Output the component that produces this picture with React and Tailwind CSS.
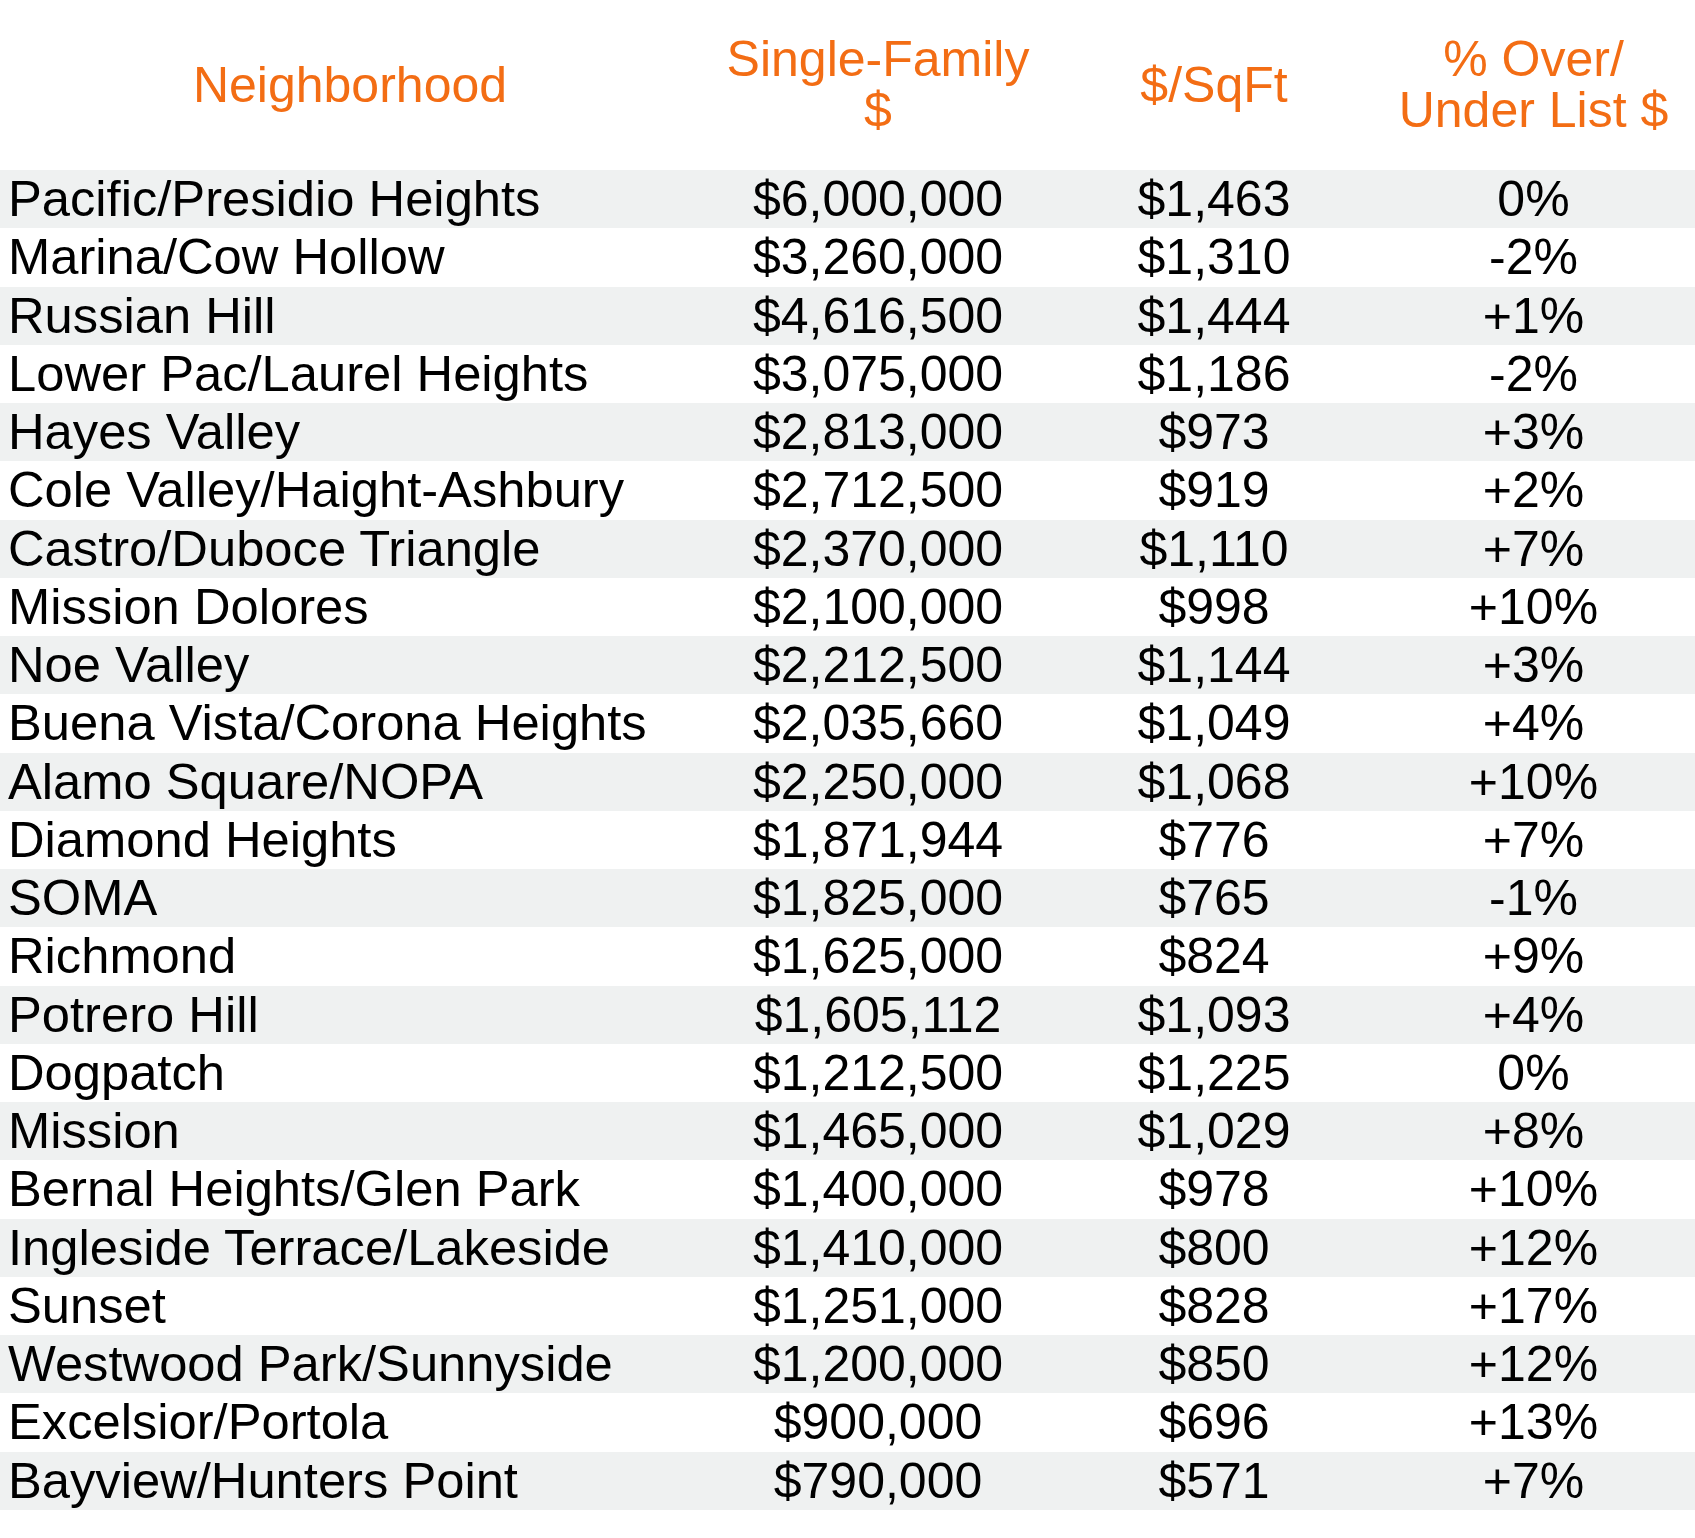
import React from "react";

const rows = [
  ["Pacific/Presidio Heights", "$6,000,000", "$1,463", "0%"],
  ["Marina/Cow Hollow", "$3,260,000", "$1,310", "-2%"],
  ["Russian Hill", "$4,616,500", "$1,444", "+1%"],
  ["Lower Pac/Laurel Heights", "$3,075,000", "$1,186", "-2%"],
  ["Hayes Valley", "$2,813,000", "$973", "+3%"],
  ["Cole Valley/Haight-Ashbury", "$2,712,500", "$919", "+2%"],
  ["Castro/Duboce Triangle", "$2,370,000", "$1,110", "+7%"],
  ["Mission Dolores", "$2,100,000", "$998", "+10%"],
  ["Noe Valley", "$2,212,500", "$1,144", "+3%"],
  ["Buena Vista/Corona Heights", "$2,035,660", "$1,049", "+4%"],
  ["Alamo Square/NOPA", "$2,250,000", "$1,068", "+10%"],
  ["Diamond Heights", "$1,871,944", "$776", "+7%"],
  ["SOMA", "$1,825,000", "$765", "-1%"],
  ["Richmond", "$1,625,000", "$824", "+9%"],
  ["Potrero Hill", "$1,605,112", "$1,093", "+4%"],
  ["Dogpatch", "$1,212,500", "$1,225", "0%"],
  ["Mission", "$1,465,000", "$1,029", "+8%"],
  ["Bernal Heights/Glen Park", "$1,400,000", "$978", "+10%"],
  ["Ingleside Terrace/Lakeside", "$1,410,000", "$800", "+12%"],
  ["Sunset", "$1,251,000", "$828", "+17%"],
  ["Westwood Park/Sunnyside", "$1,200,000", "$850", "+12%"],
  ["Excelsior/Portola", "$900,000", "$696", "+13%"],
  ["Bayview/Hunters Point", "$790,000", "$571", "+7%"],
];

const cols = "grid grid-cols-[700px_356px_316px_323px]";

const App = () => {
  return (
    <div className="w-[1695px] h-[1538px] bg-white font-['Liberation_Sans',Arial,sans-serif] text-black">
      {/* header */}
      <div
        className={`${cols} h-[170px] items-center text-[50px] leading-[51px] text-[#f36d14] text-center`}
      >
        <div>Neighborhood</div>
        <div>
          Single-Family
          <br />$
        </div>
        <div>$/SqFt</div>
        <div>
          % Over/
          <br />
          Under List $
        </div>
      </div>

      {/* body */}
      <div className="flex flex-col">
        {rows.map((r, i) => (
          <div
            key={r[0]}
            className={`${cols} h-[58.26px] items-center text-[50px] leading-[58px] whitespace-nowrap ${
              i % 2 === 0 ? "bg-[#eff1f1]" : "bg-white"
            }`}
          >
            <div className="pl-2 text-[50.7px]">{r[0]}</div>
            <div className="text-center">{r[1]}</div>
            <div className="text-center">{r[2]}</div>
            <div className="text-center">{r[3]}</div>
          </div>
        ))}
      </div>
    </div>
  );
};

export default App;
